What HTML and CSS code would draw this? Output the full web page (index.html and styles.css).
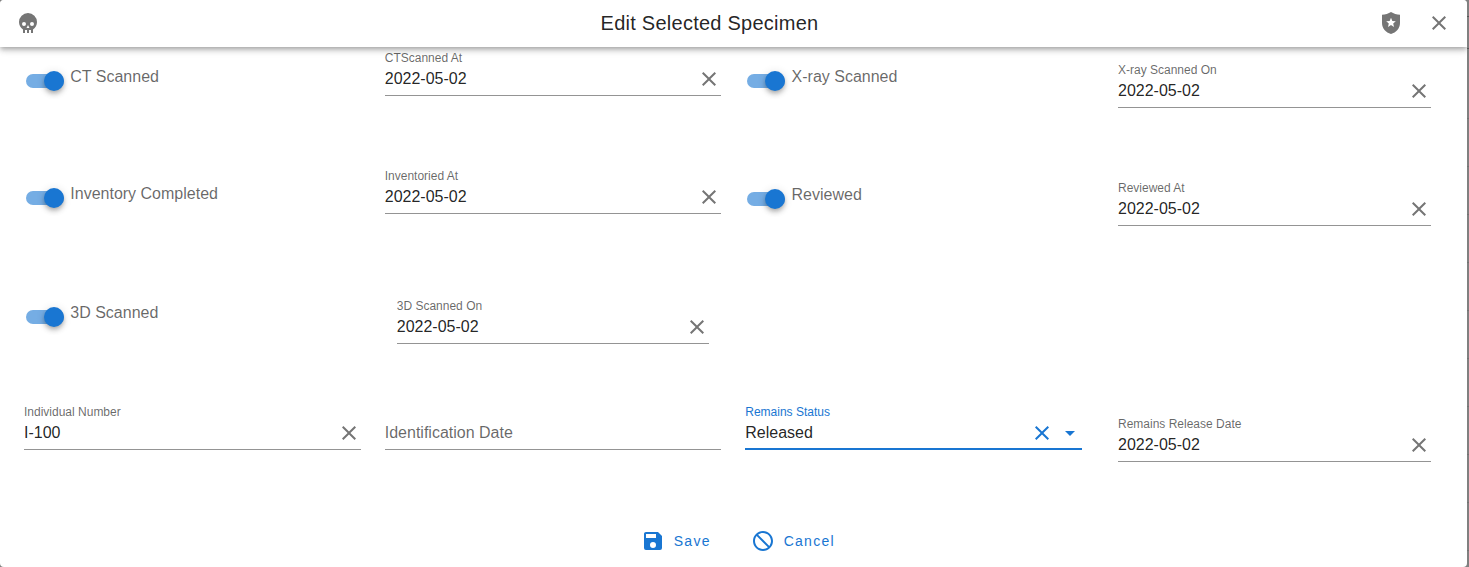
FILE: index.html
```html
<!DOCTYPE html>
<html lang="en">
<head>
<meta charset="utf-8">
<title>Edit Selected Specimen</title>
<link rel="stylesheet" href="styles.css">
</head>
<body>
<svg class="sprite" aria-hidden="true">
  <symbol id="close" viewBox="0 0 24 24"><path d="M19,6.41L17.59,5L12,10.59L6.41,5L5,6.41L10.59,12L5,17.59L6.41,19L12,13.41L17.59,19L19,17.59L13.41,12L19,6.41Z"/></symbol>
</svg>
<div class="dialog">
  <header class="toolbar">
    <svg class="icon" viewBox="0 0 24 24"><path d="M12,2A9,9 0 0,0 3,11C3,14.03 4.53,16.82 7,18.47V22H9V19H11V22H13V19H15V22H17V18.46C19.47,16.81 21,14 21,11A9,9 0 0,0 12,2M8,11A2,2 0 0,1 10,13A2,2 0 0,1 8,15A2,2 0 0,1 6,13A2,2 0 0,1 8,11M16,11A2,2 0 0,1 18,13A2,2 0 0,1 16,15A2,2 0 0,1 14,13A2,2 0 0,1 16,11M12,14L13.5,17H10.5L12,14Z"/></svg>
    <h1 class="title">Edit Selected Specimen</h1>
    <div class="actions">
      <svg class="icon" viewBox="0 0 24 24"><path fill-rule="evenodd" d="M12,1C9.5,2.6 6.2,3.6 3,3.8V12C3,17.3 6.8,21.5 12,23C17.2,21.5 21,17.3 21,12V3.8C17.8,3.6 14.5,2.6 12,1M12,6.7L13.35,9.9L16.8,10.2L14.2,12.5L15,15.9L12,14.1L9,15.9L9.8,12.5L7.2,10.2L10.65,9.9Z"/></svg>
      <svg class="icon"><use href="#close"/></svg>
    </div>
  </header>
  <main class="form">
    <label class="switch"><span class="track"><span class="thumb"></span></span><span class="switch-label">CT Scanned</span></label>
    <div class="field"><div class="text"><span class="label">CTScanned At</span><span class="value">2022-05-02</span></div><svg class="icon"><use href="#close"/></svg></div>
    <label class="switch"><span class="track"><span class="thumb"></span></span><span class="switch-label">X-ray Scanned</span></label>
    <div class="field inset"><div class="text"><span class="label">X-ray Scanned On</span><span class="value">2022-05-02</span></div><svg class="icon"><use href="#close"/></svg></div>

    <label class="switch raised"><span class="track"><span class="thumb"></span></span><span class="switch-label">Inventory Completed</span></label>
    <div class="field"><div class="text"><span class="label">Inventoried At</span><span class="value">2022-05-02</span></div><svg class="icon"><use href="#close"/></svg></div>
    <label class="switch"><span class="track"><span class="thumb"></span></span><span class="switch-label">Reviewed</span></label>
    <div class="field inset"><div class="text"><span class="label">Reviewed At</span><span class="value">2022-05-02</span></div><svg class="icon"><use href="#close"/></svg></div>

    <label class="switch"><span class="track"><span class="thumb"></span></span><span class="switch-label">3D Scanned</span></label>
    <div class="field inset"><div class="text"><span class="label">3D Scanned On</span><span class="value">2022-05-02</span></div><svg class="icon"><use href="#close"/></svg></div>

    <div class="field first-column"><div class="text"><span class="label">Individual Number</span><span class="value">I-100</span></div><svg class="icon"><use href="#close"/></svg></div>
    <div class="field"><div class="text"><span class="value placeholder">Identification Date</span></div></div>
    <div class="field focused"><div class="text"><span class="label">Remains Status</span><span class="value">Released</span></div><svg class="icon"><use href="#close"/></svg><svg class="icon" viewBox="0 0 24 24"><path d="M7,10L12,15L17,10H7Z"/></svg></div>
    <div class="field inset"><div class="text"><span class="label">Remains Release Date</span><span class="value">2022-05-02</span></div><svg class="icon"><use href="#close"/></svg></div>
  </main>
  <footer class="footer">
    <button class="button"><svg class="icon" viewBox="0 0 24 24"><path d="M15,9H5V5H15M12,19A3,3 0 0,1 9,16A3,3 0 0,1 12,13A3,3 0 0,1 15,16A3,3 0 0,1 12,19M17,3H5C3.89,3 3,3.9 3,5V19A2,2 0 0,0 5,21H19A2,2 0 0,0 21,19V7L17,3Z"/></svg>Save</button>
    <button class="button"><svg class="icon" viewBox="0 0 24 24"><path d="M12 2C17.5 2 22 6.5 22 12S17.5 22 12 22 2 17.5 2 12 6.5 2 12 2M12 4C10.1 4 8.4 4.6 7.1 5.7L18.3 16.9C19.3 15.5 20 13.8 20 12C20 7.6 16.4 4 12 4M16.9 18.3L5.7 7.1C4.6 8.4 4 10.1 4 12C4 16.4 7.6 20 12 20C13.9 20 15.6 19.4 16.9 18.3Z"/></svg>Cancel</button>
  </footer>
</div>
</body>
</html>
```
FILE: styles.css
```css
* { box-sizing: border-box; }
body {
  margin: 0;
  background:
    linear-gradient(#555, #555) 0 16px / 100% 1px no-repeat,
    linear-gradient(#555, #555) 0 48px / 100% 1px no-repeat,
    linear-gradient(#808080, #808080) 0 0 / 100% 100px no-repeat,
    repeating-linear-gradient(#808080 0 22px, #727272 22px 23px, #808080 23px 48px);
  font-family: "Liberation Sans", Arial, sans-serif;
  font-size: 16px;
  color: rgba(0, 0, 0, .87);
}
.sprite { display: none; }
.icon { width: 24px; height: 24px; flex: none; display: block; fill: #757575; }
.dialog {
  width: 1467px;
  height: 567px;
  display: flex;
  flex-direction: column;
  background: #fff;
  border-radius: 4px;
  overflow: hidden;
}
.toolbar {
  position: relative;
  z-index: 1;
  flex: none;
  height: 47px;
  padding: 0 16px 1px;
  display: grid;
  grid-template-columns: 1fr auto 1fr;
  align-items: center;
  background: #fff;
  box-shadow: 0 2px 4px -1px rgba(0, 0, 0, .2), 0 4px 5px rgba(0, 0, 0, .14), 0 1px 10px rgba(0, 0, 0, .12);
}
.title {
  margin: 0;
  padding-right: 48px;
  font-size: 20px;
  font-weight: 400;
  line-height: 24px;
  letter-spacing: .25px;
}
.actions { display: flex; justify-content: flex-end; gap: 24px; }
.form {
  flex: none;
  display: grid;
  grid-template-columns: 336.75px 336.5px 336.75px 337px;
  grid-auto-rows: 118px;
  column-gap: 24px;
  align-items: start;
  padding: 1px 24px 0;
}
.field {
  height: 48px;
  display: flex;
  align-items: flex-end;
  gap: 4px;
  padding-bottom: 4px;
  border-bottom: 1px solid #949494;
}
.field.inset { margin: 12px 12px 0; }
.first-column { grid-column: 1; }
.text { flex: 1; display: flex; flex-direction: column; }
.label { font-size: 12px; line-height: 14px; color: rgba(0, 0, 0, .6); }
.value { line-height: 20px; margin: 4px 0 2px; }
.placeholder { color: rgba(0, 0, 0, .6); }
.focused { border-bottom: 2px solid #1976d2; padding-bottom: 3px; }
.focused .label { color: #1976d2; }
.focused .icon { fill: #1976d2; }
.switch { display: flex; align-items: flex-start; gap: 6px; padding: 26px 0 0 2px; }
.switch.raised { padding-top: 25px; }
.track {
  width: 38px;
  height: 14px;
  border-radius: 7px;
  background: #75ade4;
  display: flex;
  align-items: center;
  justify-content: flex-end;
}
.thumb {
  width: 20px;
  height: 20px;
  flex: none;
  border-radius: 50%;
  background: #1976d2;
  box-shadow: 0 2px 4px -1px rgba(0, 0, 0, .2), 0 4px 5px rgba(0, 0, 0, .14), 0 1px 10px rgba(0, 0, 0, .12);
}
.switch-label { line-height: 20px; margin-top: -7px; padding-left: .3px; color: rgba(0, 0, 0, .6); }
.footer { display: flex; justify-content: center; gap: 40px; padding: 9px 0 0 8.6px; }
.button {
  height: 24px;
  display: flex;
  align-items: center;
  gap: 9px;
  padding: 0;
  border: 0;
  background: none;
  font: 14px/24px "Liberation Sans", Arial, sans-serif;
  letter-spacing: 1.25px;
  color: #1976d2;
}
.button .icon { fill: #1976d2; }
```
